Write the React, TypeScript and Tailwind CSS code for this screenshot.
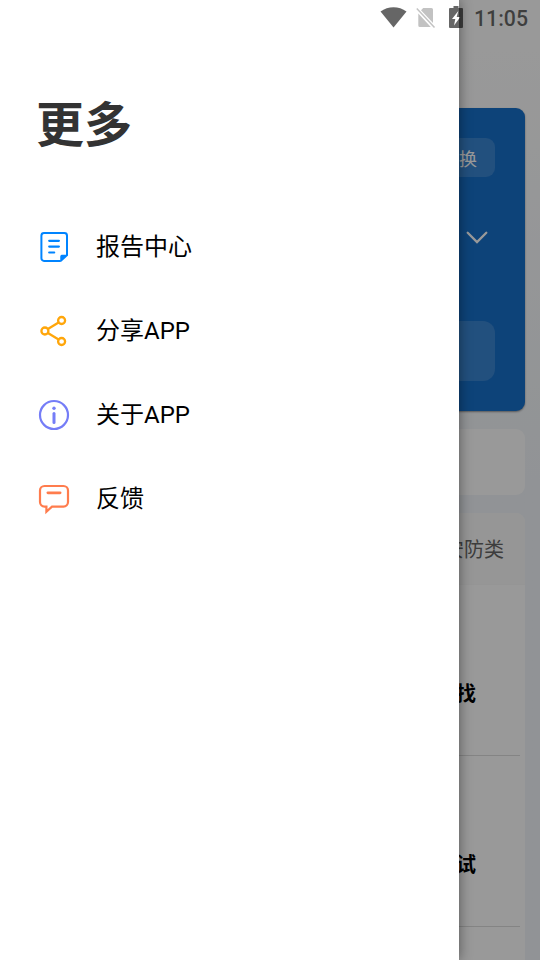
import type { ReactNode } from 'react';

const menu: { label: string; latin?: string; icon: ReactNode }[] = [
  {
    label: '报告中心',
    icon: (
      <svg width="32" height="32" viewBox="0 0 32 32" fill="none" stroke="#0084ff" strokeWidth="2.200" strokeLinecap="round" strokeLinejoin="round">
        <path d="M22 29.900H6A2.600 2.600 0 0 1 3.400 27.300V4.600A2.600 2.600 0 0 1 6 2.100h20.400A2.600 2.600 0 0 1 29 4.600V24" strokeWidth="2" />
        <path d="M23 30v-4.500a1 1 0 0 1 1-1h5z" fill="#0084ff" strokeWidth="1.500" />
        <path d="M11.200 9.800h9.700M11.200 15.600h9.700M11.200 21.500h5" />
      </svg>
    ),
  },
  {
    label: '分享',
    latin: 'APP',
    icon: (
      <svg width="32" height="32" viewBox="0 0 32 32" fill="none" stroke="#ffa60a" strokeWidth="2.300">
        <circle cx="6.900" cy="16" r="3.500" />
        <circle cx="23.600" cy="5.500" r="3.500" />
        <circle cx="23.600" cy="26.500" r="3.500" />
        <path d="M9.900 14l10.700-6.500M9.900 18l10.700 6.500" />
      </svg>
    ),
  },
  {
    label: '关于',
    latin: 'APP',
    icon: (
      <svg width="32" height="32" viewBox="0 0 32 32" fill="none" stroke="#757df7" strokeWidth="2.200">
        <circle cx="16" cy="16" r="14" />
        <path d="M16 14.500v9" strokeWidth="3" strokeLinecap="round" />
        <circle cx="16" cy="9.200" r="1.700" fill="#757df7" stroke="none" />
      </svg>
    ),
  },
  {
    label: '反馈',
    icon: (
      <svg width="32" height="32" viewBox="0 0 32 32" fill="none" stroke="#ff7c4d" strokeWidth="2.200">
        <path d="M8.400 23.600H6.500A4.500 4.500 0 0 1 2 19.100V7.500A4.500 4.500 0 0 1 6.500 3h19A4.500 4.500 0 0 1 30 7.500v11.600a4.500 4.500 0 0 1-4.500 4.500H14L8.400 28.700v-5.100z" />
        <path d="M9.900 9.800h12.200" strokeWidth="2.800" strokeLinecap="round" />
      </svg>
    ),
  },
];

function HomeScreen() {
  return (
    <div className="flex h-full flex-col gap-[18px] bg-linear-to-b from-white from-5% to-[#f2f6fa] to-50% px-[15px] pt-[108px]">
      <section className="flex h-[303px] shrink-0 flex-col items-end rounded-[9px] bg-[#1770ca] px-[30px] pt-[30px] shadow-[0_1px_2px_rgba(0,0,0,0.4)]">
        <div className="flex h-[39px] w-[76px] items-center justify-end rounded-[9px] bg-white/15 pr-[18px] pt-[4px] text-[18px] text-white">切换</div>
        <div className="flex h-[120px] items-center pr-[7px]">
          <svg width="22" height="13" viewBox="0 0 22 13" fill="none" stroke="white" strokeWidth="2.300" strokeLinecap="round">
            <path d="M1.700 1.700L11 11l9.300-9.300" />
          </svg>
        </div>
        <div className="mt-6 h-[60px] w-full rounded-[12px] bg-white/15" />
      </section>
      <section className="h-[66px] shrink-0 rounded-[9px] bg-white" />
      <section className="flex grow flex-col overflow-hidden rounded-t-[9px] bg-white">
        <div className="flex h-[72px] shrink-0 items-center justify-end border-b border-[#f8f8f8] bg-[#fafafa] pr-[21px] pt-[2px] text-[20px] text-[#666]">安防类</div>
        <div className="mx-[5px] flex h-[171px] shrink-0 items-center justify-end border-b border-[#dcdcdc] pr-[44px] pt-[48px] text-[20px] font-bold text-black">查找</div>
        <div className="mx-[5px] flex h-[171px] shrink-0 items-center justify-end border-b border-[#dcdcdc] pr-[44px] pt-[48px] text-[20px] font-bold text-black">测试</div>
      </section>
    </div>
  );
}

function StatusBar() {
  return (
    <div className="absolute inset-x-0 top-0 flex h-9 items-center justify-end pr-3 text-black/60">
      <svg className="-mt-px" width="27" height="21" viewBox="0 0 27 21" fill="currentColor">
        <path d="M0.500 4.500C8-1.200 19-1.200 26.500 4.500L13.500 20.500z" />
      </svg>
      <svg className="ml-[9px]" width="20" height="22" viewBox="0 0 20 22">
        <path d="M2.300 6.500L14.800 20H3.800a1.500 1.500 0 0 1-1.500-1.500zM5 3.200L7.200 1h8.300A1.500 1.500 0 0 1 17 2.500V16z" fill="black" fillOpacity="0.240" />
        <path d="M0.800 1.500L18.500 20.500" stroke="black" strokeOpacity="0.240" strokeWidth="1.500" />
      </svg>
      <svg className="-mt-[2px] ml-[13px]" width="14" height="22" viewBox="0 0 14 22" fill="currentColor" fillRule="evenodd">
        <path d="M4.500 0h5v2H13a1 1 0 0 1 1 1v18a1 1 0 0 1-1 1H1a1 1 0 0 1-1-1V3a1 1 0 0 1 1-1h3.500zM9.300 5L3 13h3.300L5 19.500l6.300-8.500H7.700z" />
      </svg>
      <span className="ml-[11px] pt-[2px] font-[Roboto] text-[21.300px] font-medium leading-none">11:05</span>
    </div>
  );
}

export default function App() {
  return (
    <div className="relative h-[960px] w-[540px] overflow-hidden font-['Roboto','Noto_Sans_CJK_SC',sans-serif]">
      <HomeScreen />
      <div className="absolute inset-0 bg-black/40" />
      <aside className="absolute inset-y-0 left-0 w-[459px] bg-white pt-[90px] shadow-[0_0_12px_rgba(0,0,0,0.450)]">
        <h1 className="pl-9 text-[48px] font-bold leading-[72px] text-[#333]">更多</h1>
        <nav className="mt-[43px]">
          {menu.map((item) => (
            <a key={item.label} className="flex h-[84px] items-center gap-[26px] pl-[38px] text-[24px] text-black">
              {item.icon}
              <span className="flex">
                <span>{item.label}</span>
                {item.latin && <span>{item.latin}</span>}
              </span>
            </a>
          ))}
        </nav>
      </aside>
      <StatusBar />
    </div>
  );
}
